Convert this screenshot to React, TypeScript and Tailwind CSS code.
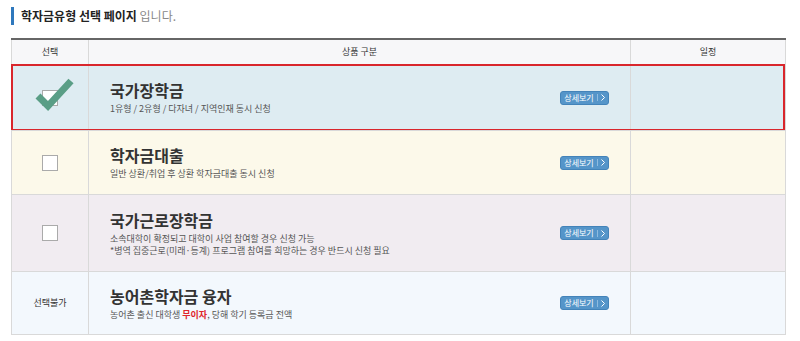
import React from 'react';

const font = { fontFamily: '"Noto Sans CJK KR", "Noto Sans", sans-serif' };

type Row = {
  id: string;
  title: string;
  desc: React.ReactNode[];
  bg: string;
  h: string;
  selectable: 'checked' | 'empty' | 'none';
  selected?: boolean;
};

const rows: Row[] = [
  {
    id: 'national',
    title: '국가장학금',
    desc: ['1유형 / 2유형 / 다자녀 / 지역인재 동시 신청'],
    bg: 'bg-[#deecf2]',
    h: 'h-[66px]',
    selectable: 'checked',
    selected: true,
  },
  {
    id: 'loan',
    title: '학자금대출',
    desc: ['일반 상환/취업 후 상환 학자금대출 동시 신청'],
    bg: 'bg-[#fcf9ea]',
    h: 'h-[64px]',
    selectable: 'empty',
  },
  {
    id: 'work',
    title: '국가근로장학금',
    desc: [
      '소속대학이 확정되고 대학이 사업 참여할 경우 신청 가능',
      '*병역 집중근로(미래·등계) 프로그램 참여를 희망하는 경우 반드시 신청 필요',
    ],
    bg: 'bg-[#f1ecf1]',
    h: 'h-[77px]',
    selectable: 'empty',
  },
  {
    id: 'rural',
    title: '농어촌학자금 융자',
    desc: [
      <>
        농어촌 출신 대학생 <span className="font-bold text-[#e0262b]">무이자</span>, 당해 학기 등록금 전액
      </>,
    ],
    bg: 'bg-[#f3f8fd]',
    h: 'h-[64px]',
    selectable: 'none',
  },
];

const CheckMark = () => (
  <svg width="36" height="30" viewBox="0 0 36 30" overflow="visible" className="absolute left-[-6px] top-[-10px]">
    <path d="M1 15 L11 25 L34 0" fill="none" stroke="#5a9e86" strokeWidth="7" />
  </svg>
);

const DetailButton = () => (
  <button className="flex h-[14px] w-[49px] items-center justify-center gap-[3px] rounded-[3px] border border-[#4383b9] bg-[#5595c9] text-[8px] leading-none text-white">
    <span>상세보기</span>
    <span className="h-[7px] w-px bg-[#8fbbe0]" />
    <svg width="4" height="7" viewBox="0 0 4 7">
      <path d="M0.5 0.5 L3.5 3.5 L0.5 6.5" fill="none" stroke="white" strokeWidth="1" />
    </svg>
  </button>
);

const App = () => {
  return (
    <div className="h-[341px] w-[800px] bg-white pl-[11px] pt-[7px] text-[#333]" style={font}>
      <div className="flex h-[18px] items-center">
        <div className="h-[18px] w-[3px] bg-[#2e78bd]" />
        <h1 className="ml-[7px] text-[12px] font-bold leading-none text-[#222]">
          학자금유형 선택 페이지 <span className="font-normal text-[#888]">입니다.</span>
        </h1>
      </div>

      <div className="mt-[13px] w-[775px] border-t-2 border-[#666]">
        <div className="grid h-[24px] grid-cols-[78px_542px_155px] bg-[#f7f7f9] text-[9px] text-[#333]">
          <div className="flex items-center justify-center border-l border-r border-[#d9d9d9]">선택</div>
          <div className="flex items-center justify-center border-r border-[#d9d9d9]">상품 구분</div>
          <div className="flex items-center justify-center border-r border-[#d9d9d9]">일정</div>
        </div>

        {rows.map((row) => (
          <div
            key={row.id}
            className={`relative grid grid-cols-[78px_542px_155px] border-t border-[#d9d9d9] ${row.bg} ${row.h} ${
              row.id === 'rural' ? 'border-b' : ''
            }`}
          >
            <div className="flex items-center justify-center border-l border-r border-[#d9d9d9]">
              {row.selectable === 'none' ? (
                <span className="text-[9px] text-[#333]">선택불가</span>
              ) : (
                <div className="relative h-[16px] w-[16px] border border-[#aaa] bg-white">
                  {row.selectable === 'checked' && <CheckMark />}
                </div>
              )}
            </div>
            <div className="flex items-center justify-between border-r border-[#d9d9d9] pl-[21px] pr-[21px]">
              <div>
                <div className="mb-[3px] text-[16px] font-bold leading-[20px] text-[#333]">{row.title}</div>
                {row.desc.map((d, i) => (
                  <div key={i} className="text-[9px] leading-[12px] text-[#555]">
                    {d}
                  </div>
                ))}
              </div>
              <DetailButton />
            </div>
            <div className="border-r border-[#d9d9d9]" />
            {row.selected && (
              <div className="pointer-events-none absolute -bottom-px -top-px left-0 right-px border-2 border-[#d9262c]" />
            )}
          </div>
        ))}
      </div>
    </div>
  );
};

export default App;
